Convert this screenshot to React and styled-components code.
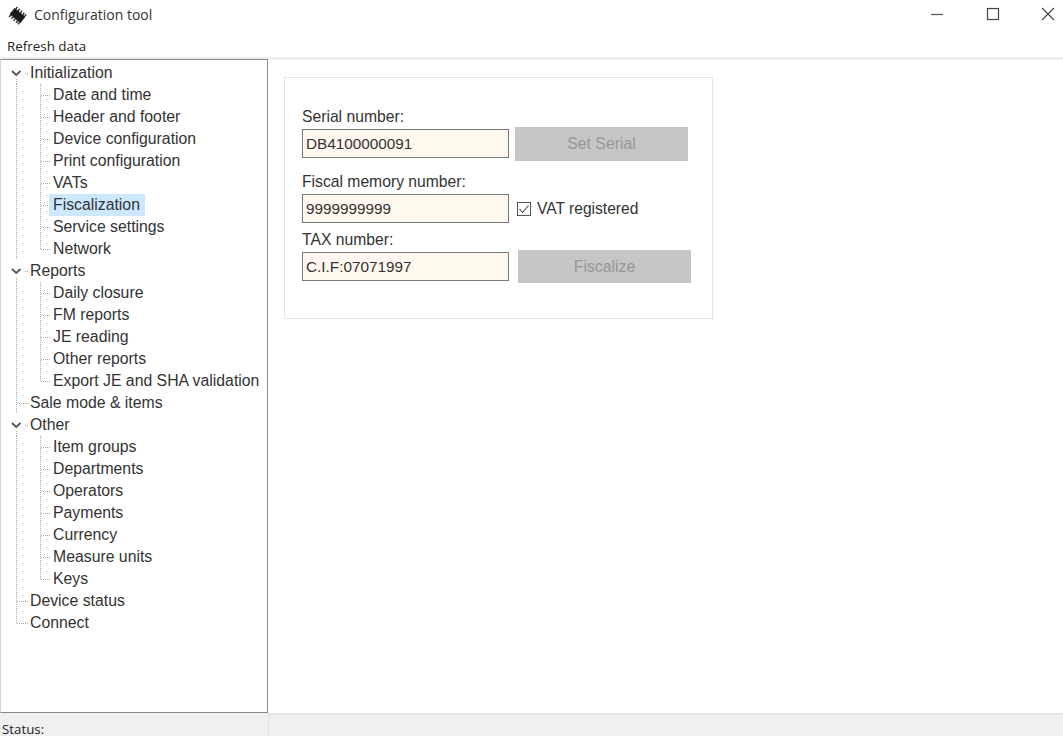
import React from 'react';
import styled, { createGlobalStyle } from 'styled-components';

const GlobalStyle = createGlobalStyle`
  html, body {
    margin: 0;
    padding: 0;
    background: #fff;
  }
  * {
    box-sizing: border-box;
  }
`;

const Window = styled.div`
  width: 1063px;
  height: 736px;
  display: flex;
  flex-direction: column;
  overflow: hidden;
  background: #fff;
  color: #333;
  font-family: "Liberation Sans", Arial, sans-serif;
`;

const TitleBar = styled.div`
  height: 33px;
  display: flex;
  align-items: center;
  padding-left: 8px;
  flex-shrink: 0;
`;

const TitleText = styled.span`
  margin: 0 0 5px 7px;
  font-family: "Open Sans", sans-serif;
  font-size: 14px;
  color: #333;
`;

const WindowControls = styled.div`
  margin-left: auto;
  display: flex;
  align-items: center;
  height: 100%;
  padding: 0 8px 5px 0;
  gap: 41.5px;
`;

const MenuBar = styled.div`
  height: 24px;
  padding: 2px 0 0 7px;
  display: flex;
  align-items: center;
  flex-shrink: 0;
  font-family: "Open Sans", sans-serif;
  font-size: 13.4px;
  color: #222;
`;

const Body = styled.div`
  flex: 1;
  display: flex;
  min-height: 0;
  border-top: 3px solid #eeeeee;
`;

const TreePanel = styled.div`
  width: 268px;
  flex-shrink: 0;
  margin-top: -1px;
  border: 1px solid #8a8a8a;
  border-left-color: #d8d8d8;
  padding-top: 2px;
  background: #fff;
`;

const Row = styled.div`
  height: 22px;
  display: flex;
  align-items: center;
`;

const Guides = styled.svg`
  width: ${p => p.$w}px;
  height: 22px;
  flex-shrink: 0;
  display: block;
`;

const Label = styled.span`
  height: 22px;
  line-height: 22px;
  margin-left: -4px;
  padding: 0 5px 0 4px;
  font-size: 15.8px;
  white-space: nowrap;
  color: #333;
  background: ${p => (p.$selected ? '#cce8ff' : 'transparent')};
`;

const Main = styled.div`
  flex: 1;
  padding: 17px 16px;
`;

const Card = styled.div`
  width: 429px;
  height: 242px;
  border: 1px solid #e4e4e4;
  padding: 30px 17px 0;
`;

const FieldLabel = styled.div`
  height: 16px;
  line-height: 18px;
  margin-top: ${p => p.$top || 0}px;
  margin-bottom: 5px;
  font-size: 15.7px;
  color: #333;
`;

const FieldRow = styled.div`
  height: 29px;
  display: flex;
  align-items: center;
`;

const TextInput = styled.div`
  width: 207px;
  height: 29px;
  flex-shrink: 0;
  display: flex;
  align-items: center;
  padding-left: 3px;
  border: 1px solid #7a7a7a;
  background: #fff8ee;
  font-size: 15.3px;
  color: #333;
`;

const DisabledButton = styled.div`
  width: ${p => p.$w}px;
  height: ${p => p.$h}px;
  margin-left: ${p => p.$left}px;
  flex-shrink: 0;
  display: flex;
  align-items: center;
  justify-content: center;
  background: #c6c6c6;
  color: #969696;
  font-size: 15.8px;
`;

const CheckRow = styled.div`
  margin-left: 8px;
  display: flex;
  align-items: center;
  gap: 6px;
  font-size: 15.6px;
  color: #333;
`;

const StatusBar = styled.div`
  height: 23px;
  flex-shrink: 0;
  display: flex;
  background: #f0f0f0;
`;

const StatusCell = styled.div`
  width: 269px;
  padding: 10px 0 0 2px;
  border-right: 1px solid #e2e2e2;
  font-family: "Open Sans", sans-serif;
  font-size: 13.3px;
  line-height: 13px;
  color: #222;
`;

const StatusRest = styled.div`
  flex: 1;
  border-top: 2px solid #e4e4e4;
`;

const AppIconSvg = styled.svg`
  width: 19px;
  height: 19px;
  margin-bottom: 3px;
  flex-shrink: 0;
`;

const AppIcon = () => (
  <AppIconSvg viewBox="0 0 19 19">
    <g transform="rotate(40 9.5 9.5)">
      <rect x="2.5" y="5.5" width="14" height="8" rx="0.5" fill="#1c1c1c" />
      <path
        d="M4 5.5V3M7 5.5V3M10 5.5V3M13 5.5V3M15.5 5.5V3M4 13.5V16M7 13.5V16M10 13.5V16M13 13.5V16M15.5 13.5V16"
        stroke="#333"
        strokeWidth="1.5"
      />
    </g>
  </AppIconSvg>
);

const Minimize = () => (
  <svg width="14" height="14" viewBox="0 0 14 14">
    <path d="M1 7.5H13" stroke="#555" strokeWidth="1.2" />
  </svg>
);

const Maximize = () => (
  <svg width="14" height="14" viewBox="0 0 14 14">
    <rect x="1.5" y="1.5" width="11" height="11" fill="none" stroke="#444" strokeWidth="1.2" />
  </svg>
);

const CloseIcon = () => (
  <svg width="14" height="14" viewBox="0 0 14 14">
    <path d="M1 1L13 13M13 1L1 13" stroke="#444" strokeWidth="1.1" />
  </svg>
);

const CheckBox = () => (
  <svg width="14" height="14" viewBox="0 0 14 14">
    <rect x="0.5" y="0.5" width="13" height="13" fill="#fff" stroke="#555" />
    <path d="M2.5 7L5.5 10.5L11.5 3.5" fill="none" stroke="#444" strokeWidth="1.1" />
  </svg>
);

const dot = { stroke: '#a8a8a8', strokeWidth: 1, strokeDasharray: '1 1' };

const RootGuides = ({ open, last }) => (
  <Guides $w={29} viewBox="0 0 29 22">
    {open ? (
      <>
        <path d="M15.5 17V22" {...dot} />
        <path d="M11 9L15.2 13L19.5 9" fill="none" stroke="#555" strokeWidth="1.8" />
        <path d="M24 11.5H27" {...dot} />
      </>
    ) : (
      <>
        <path d={last ? 'M15.5 0V11' : 'M15.5 0V22'} {...dot} />
        <path d="M16 11.5H27" {...dot} />
      </>
    )}
  </Guides>
);

const ChildGuides = ({ last }) => (
  <Guides $w={52} viewBox="0 0 52 22">
    <path d="M15.5 0V22" {...dot} />
    <path d={last ? 'M39.5 0V11' : 'M39.5 0V22'} {...dot} />
    <path d="M40 11.5H50" {...dot} />
  </Guides>
);

const tree = [
  { label: 'Initialization', children: ['Date and time', 'Header and footer', 'Device configuration', 'Print configuration', 'VATs', 'Fiscalization', 'Service settings', 'Network'] },
  { label: 'Reports', children: ['Daily closure', 'FM reports', 'JE reading', 'Other reports', 'Export JE and SHA validation'] },
  { label: 'Sale mode & items' },
  { label: 'Other', children: ['Item groups', 'Departments', 'Operators', 'Payments', 'Currency', 'Measure units', 'Keys'] },
  { label: 'Device status' },
  { label: 'Connect' },
];

const Tree = () => (
  <TreePanel>
    {tree.map((node, i) => (
      <React.Fragment key={node.label}>
        <Row>
          <RootGuides open={!!node.children} last={i === tree.length - 1} />
          <Label>{node.label}</Label>
        </Row>
        {(node.children || []).map((child, j) => (
          <Row key={child}>
            <ChildGuides last={j === node.children.length - 1} />
            <Label $selected={child === 'Fiscalization'}>{child}</Label>
          </Row>
        ))}
      </React.Fragment>
    ))}
  </TreePanel>
);

export default function App() {
  return (
    <Window>
      <GlobalStyle />
      <TitleBar>
        <AppIcon />
        <TitleText>Configuration tool</TitleText>
        <WindowControls>
          <Minimize />
          <Maximize />
          <CloseIcon />
        </WindowControls>
      </TitleBar>
      <MenuBar>Refresh data</MenuBar>
      <Body>
        <Tree />
        <Main>
          <Card>
            <FieldLabel>Serial number:</FieldLabel>
            <FieldRow>
              <TextInput>DB4100000091</TextInput>
              <DisabledButton $w={173} $h={34} $left={6}>Set Serial</DisabledButton>
            </FieldRow>
            <FieldLabel $top={15}>Fiscal memory number:</FieldLabel>
            <FieldRow>
              <TextInput>9999999999</TextInput>
              <CheckRow>
                <CheckBox />
                VAT registered
              </CheckRow>
            </FieldRow>
            <FieldLabel $top={8}>TAX number:</FieldLabel>
            <FieldRow>
              <TextInput>C.I.F:07071997</TextInput>
              <DisabledButton $w={173} $h={33} $left={9}>Fiscalize</DisabledButton>
            </FieldRow>
          </Card>
        </Main>
      </Body>
      <StatusBar>
        <StatusCell>Status:</StatusCell>
        <StatusRest />
      </StatusBar>
    </Window>
  );
}
